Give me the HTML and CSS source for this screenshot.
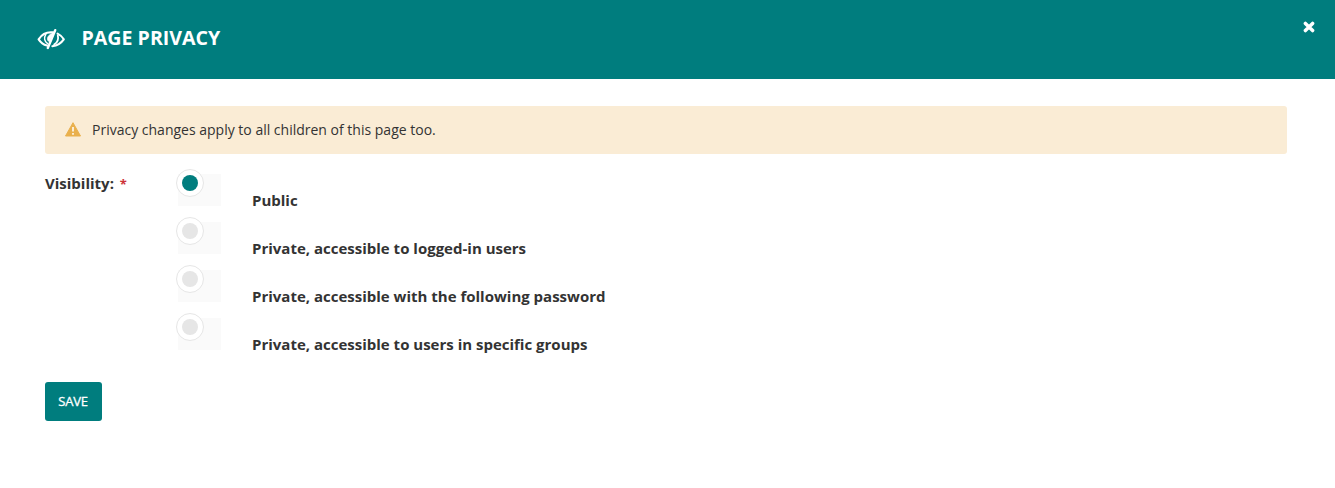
FILE: index.html
```html
<!DOCTYPE html>
<html lang="en">
<head>
<meta charset="utf-8">
<title>Page privacy</title>
<link rel="stylesheet" href="styles.css">
</head>
<body>
<header class="header">
  <svg class="header-icon" viewBox="0 0 28 22" width="28" height="22" fill="none" stroke="#fff" stroke-width="2.1" stroke-linecap="round" stroke-linejoin="round">
    <path d="M10 17.6C6.6 16.6 3.8 14.6 1.6 11.3C4.6 6.8 9 4.3 13.8 4.3L16 4.4"/>
    <path d="M20.6 5.6C23.2 6.8 25.2 8.8 26.8 11.3C24.2 15 20.6 17.6 15.4 18.2"/>
    <path d="M18.2 2.2L10.8 20" stroke-width="2.4"/>
    <path d="M8.8 6.4C6.6 10 7.6 13.6 10.6 15.6" stroke-width="1.5"/>
    <path d="M15.8 5.4L12.5 13.5L10.9 12.6C9.8 9.6 11.6 6.4 15.8 5.4Z" fill="#fff" stroke-width="1"/>
    <path d="M20.8 7.4C21.8 11.2 20.4 14.4 17.2 16.6" stroke-width="1.8"/>
  </svg>
  <h1 class="title">Page privacy</h1>
  <button class="close" aria-label="Close">
    <svg viewBox="0 0 12 12" width="12" height="12"><path d="M2.4 2.4L9.6 9.6M9.6 2.4L2.4 9.6" stroke="#fff" stroke-width="3.5" stroke-linecap="round"/></svg>
  </button>
</header>
<main class="content">
  <div class="warning">
    <svg class="warning-icon" viewBox="0 0 16 15" width="16" height="15"><path d="M8 .7L15.5 14H.5Z" fill="#e9b04d" stroke="#e9b04d" stroke-linejoin="round"/><path d="M8 5V9.4M8 11V12.8" stroke="#faecd5" stroke-width="2"/></svg>
    <span>Privacy changes apply to all children of this page too.</span>
  </div>
  <form class="form">
    <div class="field">
      <div class="label">Visibility: <span class="required">*</span></div>
      <ul class="options">
        <li class="option"><span class="control"><span class="radio checked"></span></span><span class="option-text">Public</span></li>
        <li class="option"><span class="control"><span class="radio"></span></span><span class="option-text">Private, accessible to logged-in users</span></li>
        <li class="option"><span class="control"><span class="radio"></span></span><span class="option-text">Private, accessible with the following password</span></li>
        <li class="option"><span class="control"><span class="radio"></span></span><span class="option-text">Private, accessible to users in specific groups</span></li>
      </ul>
    </div>
    <button class="save" type="button">Save</button>
  </form>
</main>
</body>
</html>
```
FILE: styles.css
```css
* { box-sizing: border-box; }
body {
  margin: 0;
  background: #fff;
  color: #333;
  font-family: "Open Sans", sans-serif;
}
.header {
  display: flex;
  align-items: flex-start;
  height: 79px;
  padding: 0 19px 0 37px;
  background: #007d7e;
  color: #fff;
}
.header-icon { margin-top: 28px; }
.title {
  margin: 24px 0 0 16.5px;
  font-size: 19.6px;
  line-height: 28px;
  font-weight: 700;
  text-transform: uppercase;
}
.close {
  display: flex;
  margin: 21px 1px 0 auto;
  padding: 0;
  border: 0;
  background: none;
}
.content { padding: 27px 48px 0 45px; }
.warning {
  display: flex;
  align-items: center;
  height: 48px;
  padding: 0 0 2px 20px;
  border-radius: 3px;
  background: #faecd5;
  font-size: 14px;
}
.warning-icon { margin-right: 11px; }
.field {
  display: flex;
  padding-top: 20px;
}
.label {
  width: 133px;
  margin-top: -1px;
  font-size: 15px;
  line-height: 20px;
  font-weight: 700;
}
.required {
  margin-left: 2px;
  color: #cd3238;
  font-size: 13px;
}
.options {
  margin: 0;
  padding: 0;
  list-style: none;
}
.option {
  display: flex;
  height: 48px;
}
.control {
  width: 43px;
  height: 32px;
  background: #fafafa;
}
.radio {
  display: flex;
  align-items: center;
  justify-content: center;
  width: 28px;
  height: 28px;
  margin: -5px 0 0 -2px;
  border: 1px solid #e6e6e6;
  border-radius: 50%;
  background: #fff;
}
.radio::before {
  content: "";
  width: 16px;
  height: 16px;
  border-radius: 50%;
  background: #e6e6e6;
}
.radio.checked::before { background: #007d7e; }
.option-text {
  padding: 16px 0 0 31px;
  font-size: 15px;
  line-height: 20px;
  font-weight: 700;
}
.save {
  display: block;
  width: 57px;
  height: 39px;
  margin-top: 16px;
  padding: 0 1px 2px 0;
  border: 0;
  border-radius: 3px;
  background: #007d7e;
  color: #fff;
  font: 13px "Open Sans", sans-serif;
  -webkit-text-stroke: 0.3px #fff;
  letter-spacing: -0.2px;
  text-transform: uppercase;
}
```
